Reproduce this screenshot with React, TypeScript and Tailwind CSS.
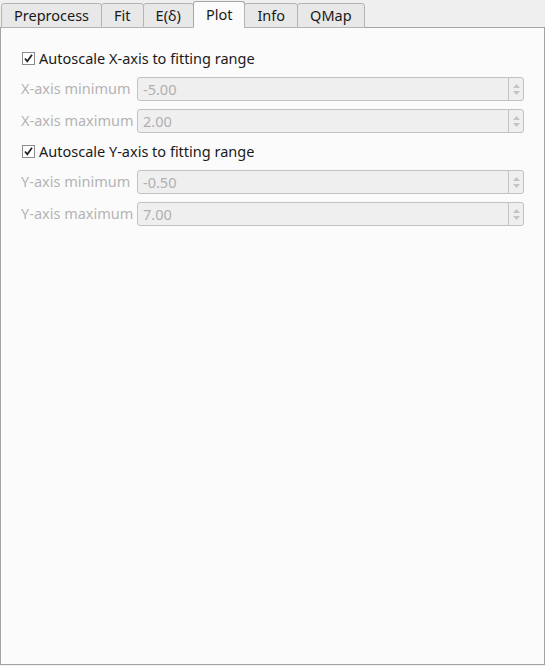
import { useState } from 'react'

const tabs = ['Preprocess', 'Fit', 'E(δ)', 'Plot', 'Info', 'QMap']

function CheckRow({ label }: { label: string }) {
  const [checked, setChecked] = useState(true)
  return (
    <label className="flex items-center h-[21px] cursor-default select-none" onClick={() => setChecked(!checked)}>
      <span className="w-[13px] h-[13px] ml-[21px] border border-[#8c8c8c] bg-white flex items-center justify-center">
        {checked && (
          <svg width="11" height="11" viewBox="0 0 11 11">
            <path d="M2 5.5 L4.3 8.3 L9 1.8" fill="none" stroke="#202020" strokeWidth="1.7" />
          </svg>
        )}
      </span>
      <span className="ml-[4px] text-[#1a1a1a]">{label}</span>
    </label>
  )
}

function SpinRow({ label, value }: { label: string; value: string }) {
  return (
    <div className="flex items-center h-[24px]">
      <span className="w-[136px] pl-[20px] text-[#b4b4b4]">{label}</span>
      <div className="flex-1 mr-[20px] h-[24px] flex border border-[#c2c2c2] rounded-[3px] bg-[#efefef]">
        <span className="flex-1 pl-[5px] leading-[22px] text-[#b0b0b0]">{value}</span>
        <span className="w-[15px] border-l border-[#c2c2c2] flex flex-col items-center justify-center gap-[3px]">
          <svg width="7" height="4" viewBox="0 0 7 4"><path d="M0 4 L3.5 0 L7 4Z" fill="#c4c4c4" /></svg>
          <svg width="7" height="4" viewBox="0 0 7 4"><path d="M0 0 L3.5 4 L7 0Z" fill="#c4c4c4" /></svg>
        </span>
      </div>
    </div>
  )
}

export default function App() {
  const [active, setActive] = useState('Plot')
  return (
    <div className="w-[545px] h-[666px] bg-[#efefef] flex flex-col text-[14.5px]" style={{ fontFamily: '"Noto Sans", sans-serif' }}>
      <div className="flex h-[28px] items-end pl-[1px] -mb-[1px] relative z-10">
        {tabs.map((t) => {
          const sel = t === active
          return (
            <button
              key={t}
              onClick={() => setActive(t)}
              className={
                sel
                  ? 'h-[27px] px-[12px] border border-[#a6a6a6] border-b-[#fbfbfb] bg-[#fbfbfb] rounded-t-[3px] text-[#1a1a1a] -ml-[1px]'
                  : 'h-[25px] px-[12px] border border-[#b4b4b4] bg-[#e8e8e8] rounded-t-[3px] text-[#1a1a1a] -ml-[1px] first:ml-0'
              }
            >
              {t}
            </button>
          )
        })}
      </div>
      <div className="flex-1 mb-[1px] border border-[#a3a3a3] bg-[#fbfbfb] pt-[20px] flex flex-col gap-[8px]">
        <CheckRow label="Autoscale X-axis to fitting range" />
        <SpinRow label="X-axis minimum" value="-5.00" />
        <SpinRow label="X-axis maximum" value="2.00" />
        <CheckRow label="Autoscale Y-axis to fitting range" />
        <SpinRow label="Y-axis minimum" value="-0.50" />
        <SpinRow label="Y-axis maximum" value="7.00" />
      </div>
    </div>
  )
}
